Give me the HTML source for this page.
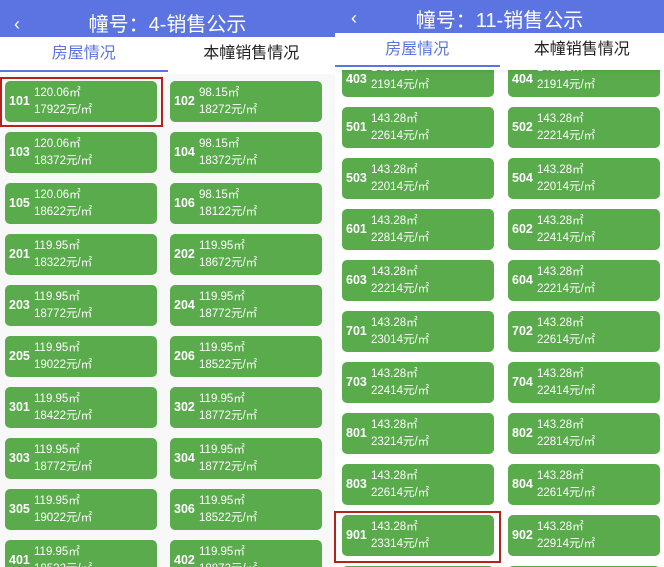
<!DOCTYPE html>
<html><head><meta charset="utf-8"><style>
*{margin:0;padding:0;box-sizing:border-box}
html,body{width:664px;height:567px;overflow:hidden}
body{position:relative;background:#fff;font-family:"Liberation Sans","Noto Sans CJK SC",sans-serif}
.p{position:absolute;top:0;height:567px;overflow:hidden}
.hd{position:absolute;left:0;right:0;background:#5b74e2;color:#fff;text-align:center;font-size:20px;z-index:3}
.tabs{position:absolute;left:0;right:0;background:#fff;height:37px;font-size:16px;z-index:3}
.tab{position:absolute;top:0;width:50%;text-align:center;line-height:34px}
.t1{left:0;color:#5b74e2}.t2{right:0;color:#222}
.ul{position:absolute;left:0;width:50%;height:2px;background:#5b74e2;bottom:2px}
.c{position:absolute;width:152px;height:41px;background:#5aab4c;border-radius:5px;color:#fff}
.c b{position:absolute;left:4px;top:13px;font-size:12.5px}
.c span{position:absolute;left:29px;font-size:11.5px;line-height:14px}
.c .a{top:5px}.c .b{top:22px}
.red{position:absolute;border:2.5px solid #b3231c;z-index:5}
.bk{position:absolute;font-size:18px;color:#fff;z-index:4}
</style></head><body>
<div class="p" style="left:0;width:335px;background:#f8f8f8">
<div class="hd" style="top:0;height:37px;line-height:50px">幢号：4-销售公示</div>
<div class="bk" style="left:14px;top:14px">&lsaquo;</div>
<div class="tabs" style="top:37px"><div class="tab t1">房屋情况</div><div class="tab t2">本幢销售情况</div><div class="ul"></div></div>
<div id="L"></div>
</div>
<div class="p" style="left:335px;width:329px;background:#fff">
<div class="hd" style="top:0;height:33px;line-height:42px">幢号：11-销售公示</div>
<div class="bk" style="left:16px;top:8px">&lsaquo;</div>
<div class="tabs" style="top:33px;height:37px;box-shadow:0 2px 3px rgba(0,0,0,.06)"><div class="tab t1">房屋情况</div><div class="tab t2">本幢销售情况</div><div class="ul" style="bottom:3px"></div></div>
<div id="R"></div>
</div>
<div class="red" style="left:0;top:77px;width:163px;height:50px"></div>
<div class="red" style="left:334px;top:511px;width:167px;height:52px"></div>
<script>
function card(n,a,p,x,y,nt){return '<div class="c" style="left:'+x+'px;top:'+y+'px"><b'+(nt?' style="top:'+nt+'px"':'')+'>'+n+'</b><span class="a">'+a+'㎡</span><span class="b">'+p+'元/㎡</span></div>';}
var L=[["101","120.06","17922"],["102","98.15","18272"],["103","120.06","18372"],["104","98.15","18372"],["105","120.06","18622"],["106","98.15","18122"],["201","119.95","18322"],["202","119.95","18672"],["203","119.95","18772"],["204","119.95","18772"],["205","119.95","19022"],["206","119.95","18522"],["301","119.95","18422"],["302","119.95","18772"],["303","119.95","18772"],["304","119.95","18772"],["305","119.95","19022"],["306","119.95","18522"],["401","119.95","18522"],["402","119.95","18872"]];
var h='';L.forEach(function(d,i){h+=card(d[0],d[1],d[2],i%2?170:5,81+Math.floor(i/2)*51);});
document.getElementById('L').innerHTML=h;
var R=[["403","143.28","21914"],["404","143.28","21914"],["501","143.28","22614"],["502","143.28","22214"],["503","143.28","22014"],["504","143.28","22014"],["601","143.28","22814"],["602","143.28","22414"],["603","143.28","22214"],["604","143.28","22214"],["701","143.28","23014"],["702","143.28","22614"],["703","143.28","22414"],["704","143.28","22414"],["801","143.28","23214"],["802","143.28","22814"],["803","143.28","22614"],["804","143.28","22614"],["901","143.28","23314"],["902","143.28","22914"],["903","143.28","23314"],["904","143.28","22914"]];
h='';R.forEach(function(d,i){h+=card(d[0],d[1],d[2],i%2?173:7,56+Math.floor(i/2)*51,i<2?16:0);});
document.getElementById('R').innerHTML=h;
</script>
</body></html>
